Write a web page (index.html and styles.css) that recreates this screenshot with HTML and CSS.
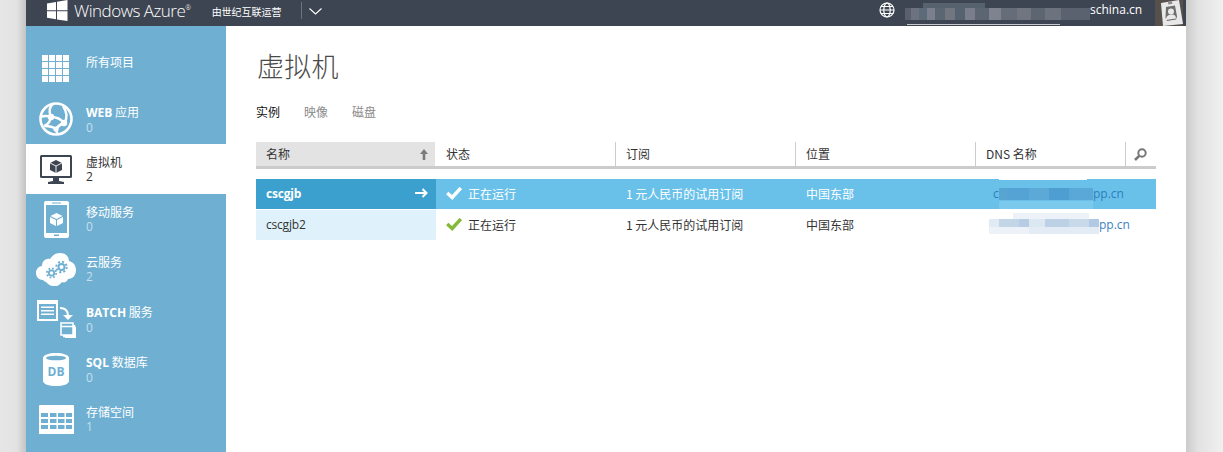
FILE: index.html
```html
<!DOCTYPE html>
<html lang="zh">
<head>
<meta charset="utf-8">
<title>虚拟机 - Windows Azure</title>
<link rel="stylesheet" href="styles.css">
</head>
<body>
<div class="shell">
  <header class="topbar">
    <svg class="flag" width="21" height="21" viewBox="0 0 21 21"><path fill="#fff" d="M0 3.500 9 2v8.300H0zM10 1.800 20.500 0v10.300H10zM0 11.300h9v7.900l-9-1.400zM10 11.300h10.500V21L10 19.400z"/></svg>
    <span class="brand">Windows Azure<sup>®</sup></span>
    <span class="operator">由世纪互联运营</span>
    <span class="divider"></span>
    <svg class="chevron" width="13" height="7" viewBox="0 0 13 7"><path fill="none" stroke="#fff" stroke-width="1.100" d="M.5.5l6 5.500 6-5.500"/></svg>
    <span class="spring"></span>
    <svg class="globe" width="16" height="16" viewBox="0 0 16 16"><g fill="none" stroke="#fff" stroke-width="1.200"><circle cx="8" cy="8" r="7"/><ellipse cx="8" cy="8" rx="3.200" ry="7"/><path d="M1 8h14M2 4.500h12M2 11.500h12"/></g></svg>
    <span class="account"><span class="mosaic-head"></span><span class="acct-text">schina.cn</span></span>
    <span class="avatar"><svg width="25" height="26" viewBox="0 0 25 26"><path fill="#e8e8e8" d="M3 3 21 0l4 24-20 2z"/><path fill="#6d6d6d" d="M8 7l9-1.500 2 11-1 3-9 1.500-1.500-3z"/><circle cx="13" cy="11.500" r="3" fill="#e8e8e8"/><path fill="#e8e8e8" d="M8 20c0-4 2-5 5-5.500s5 1 5 4z"/><path fill="#8a8a8a" d="M10 2l4-.8.400 2.500-4 .8z"/></svg></span>
  </header>

  <div class="body">
    <nav class="sidebar">
      <a class="nav-item">
        <span class="nav-icon"><svg width="28" height="28" viewBox="0 0 28 28"><path fill="#fff" d="M0 0h6v6H0zM7 0h6v6H7zM14 0h6v6h-6zM21 0h6v6h-6zM0 7h6v6H0zM7 7h6v6H7zM14 7h6v6h-6zM21 7h6v6h-6zM0 14h6v6H0zM7 14h6v6H7zM14 14h6v6h-6zM21 14h6v6h-6zM0 21h6v6H0zM7 21h6v6H7zM14 21h6v6h-6zM21 21h6v6h-6z"/></svg></span>
        <span class="nav-text"><span class="nav-label">所有项目</span></span>
      </a>
      <a class="nav-item">
        <span class="nav-icon"><svg width="34" height="34" viewBox="0 0 34 34"><circle cx="17" cy="17" r="15.500" fill="none" stroke="#fff" stroke-width="2.600"/><g fill="none" stroke="#fff" stroke-width="2.400"><path d="M14 2c-4 3-4 8-2 13M2 15c4-2 7-1 10 0M12 15c5 0 10 2 13 6M12 15c-1 5-4 8-7 9M25 21c-3 1-6 3-8 6M25 21c4-5 3-11-1-17M6 24c4 0 8 1 11 3M17 27c0 2 1 4 2 5"/></g><circle cx="12" cy="15" r="3.200" fill="#fff"/><circle cx="25" cy="21" r="3.200" fill="#fff"/><circle cx="17" cy="27" r="2.600" fill="#fff"/></svg></span>
        <span class="nav-text"><span class="nav-label"><b>WEB</b> 应用</span><span class="nav-count">0</span></span>
      </a>
      <a class="nav-item is-active">
        <span class="nav-icon"><svg width="32" height="29" viewBox="0 0 32 29"><path fill="#3e4552" d="M1.500 0h29A1.500 1.500 0 0 1 32 1.500v20a1.500 1.500 0 0 1-1.500 1.500H1.500A1.500 1.500 0 0 1 0 21.500v-20A1.500 1.500 0 0 1 1.500 0z"/><path fill="#fff" d="M2 2h28v19H2z"/><path fill="#3e4552" d="M13 23h6v3l5 1v2H8v-2l5-1zM16 5l6 3v7l-6 3-6-3V8z"/><path fill="none" stroke="#fff" stroke-width=".9" d="M10 8l6 3 6-3M16 11v7"/></svg></span>
        <span class="nav-text"><span class="nav-label">虚拟机</span><span class="nav-count">2</span></span>
      </a>
      <a class="nav-item">
        <span class="nav-icon"><svg width="25" height="37" viewBox="0 0 25 37"><path fill="#fff" d="M2 0h21a2 2 0 0 1 2 2v33a2 2 0 0 1-2 2H2a2 2 0 0 1-2-2V2a2 2 0 0 1 2-2z"/><path fill="#6fb0d2" d="M2 4h21v28H2zM8 1.500h9v1H8zM10 33.500h5V35h-5z"/><path fill="#fff" d="M12.500 12l6 3-6 3-6-3zM6 16l6 3v6l-6-3zM19 16l-6 3v6l6-3z"/></svg></span>
        <span class="nav-text"><span class="nav-label">移动服务</span><span class="nav-count">0</span></span>
      </a>
      <a class="nav-item">
        <span class="nav-icon"><svg width="40" height="33" viewBox="0 0 40 33"><path fill="#fff" d="M10 29a6 6 0 0 1-3-2c-4 0-7-3-7-7s3-7 6-7c0-5 4-8 8-7 2-3 5-6 10-6 6 0 9 4 9 8 4 1 7 4 7 9s-3 9-8 9c-1 3-4 4-6 3-2 3-6 5-9 4-3 0-5-2-7-4z"/><g fill="none" stroke="#6fb0d2"><circle cx="15.500" cy="20" r="2.700" stroke-width="1.800"/><circle cx="15.500" cy="20" r="4.600" stroke-width="1.800" stroke-dasharray="1.800 1.800"/><circle cx="25.500" cy="14" r="3" stroke-width="2"/><circle cx="25.500" cy="14" r="5.200" stroke-width="2" stroke-dasharray="2 2.080"/></g></svg></span>
        <span class="nav-text"><span class="nav-label">云服务</span><span class="nav-count">2</span></span>
      </a>
      <a class="nav-item">
        <span class="nav-icon"><svg width="39" height="38" viewBox="0 0 39 38"><path fill="#fff" d="M0 0h21v21H0z"/><path fill="#6fb0d2" d="M2 4h17v15H2z"/><path fill="#fff" d="M4 6.500h13v1.500H4zM4 10h13v1.500H4zM4 13.500h13V15H4z"/><path fill="none" stroke="#fff" stroke-width="2" d="M23 8c5 0 8 3 8 8"/><path fill="#fff" d="M26 15h10l-5 5z"/><path fill="none" stroke="#fff" stroke-width="1.500" d="M24 23h12v12H24zM24 26.500h12M37.500 25v11.500H26M39 27v10.500H28"/></svg></span>
        <span class="nav-text"><span class="nav-label"><b>BATCH</b> 服务</span><span class="nav-count">0</span></span>
      </a>
      <a class="nav-item">
        <span class="nav-icon"><svg width="26" height="33" viewBox="0 0 26 33"><path fill="#fff" d="M0 5c0-3 6-5 13-5s13 2 13 5v23c0 3-6 5-13 5S0 31 0 28z"/><ellipse cx="13" cy="5" rx="10" ry="2.300" fill="#6fb0d2"/><text x="13" y="23" class="db-text">DB</text></svg></span>
        <span class="nav-text"><span class="nav-label"><b>SQL</b> 数据库</span><span class="nav-count">0</span></span>
      </a>
      <a class="nav-item">
        <span class="nav-icon"><svg width="35" height="29" viewBox="0 0 35 29"><path fill="#fff" d="M1 0h33a1 1 0 0 1 1 1v28H0V1a1 1 0 0 1 1-1z"/><path fill="#6fb0d2" d="M2 8h7v4H2zM11 8h6.500v4H11zM19 8h6.500v4H19zM27 8h6v4h-6zM2 14h7v4H2zM11 14h6.500v4H11zM19 14h6.500v4H19zM27 14h6v4h-6zM2 20h7v4H2zM11 20h6.500v4H11zM19 20h6.500v4H19zM27 20h6v4h-6z"/></svg></span>
        <span class="nav-text"><span class="nav-label">存储空间</span><span class="nav-count">1</span></span>
      </a>
    </nav>

    <main class="content">
      <h1 class="title">虚拟机</h1>
      <div class="tabs"><span class="tab is-current">实例</span><span class="tab">映像</span><span class="tab">磁盘</span></div>

      <div class="table">
        <div class="thead">
          <div class="th is-sorted">名称<svg class="sort" width="8" height="11" viewBox="0 0 8 11"><path fill="#7a7a7a" d="M4 0 8 5H5.300v6H2.700V5H0z"/></svg></div>
          <div class="th">状态</div>
          <div class="th">订阅</div>
          <div class="th">位置</div>
          <div class="th th-dns">DNS 名称</div>
          <div class="th th-search"><svg class="search" width="13" height="13" viewBox="0 0 13 13"><circle cx="8" cy="5" r="3.700" fill="none" stroke="#777" stroke-width="2"/><path stroke="#777" stroke-width="2.600" d="M5.200 7.800 1 12"/></svg></div>
        </div>
        <div class="row is-selected">
          <div class="td td-name">cscgjb<svg class="arrow" width="13" height="10" viewBox="0 0 13 10"><path fill="none" stroke="#fff" stroke-width="2" d="M0 5h11M7.500 1l4 4-4 4"/></svg></div>
          <div class="td"><svg class="check" width="16" height="13" viewBox="0 0 16 13"><path fill="none" stroke="currentColor" stroke-width="3.400" d="M1.200 6l5 4.500L14.800 1"/></svg>正在运行</div>
          <div class="td">1 元人民币的试用订阅</div>
          <div class="td">中国东部</div>
          <div class="td td-dns"><span class="link link-first">c</span><span class="mosaic mosaic-dark"></span><span class="link">pp.cn</span></div>
        </div>
        <div class="row">
          <div class="td td-name">cscgjb2</div>
          <div class="td"><svg class="check" width="16" height="13" viewBox="0 0 16 13"><path fill="none" stroke="currentColor" stroke-width="3.400" d="M1.200 6l5 4.500L14.800 1"/></svg>正在运行</div>
          <div class="td">1 元人民币的试用订阅</div>
          <div class="td">中国东部</div>
          <div class="td td-dns"><span class="mosaic mosaic-light"></span><span class="link">pp.cn</span></div>
        </div>
      </div>
    </main>
  </div>
</div>
</body>
</html>
```
FILE: styles.css
```css
* { box-sizing: border-box; }
html, body { height: 100%; margin: 0; overflow: hidden; }
body {
  padding: 0 37px 0 26px;
  font-family: "Liberation Sans", "Noto Sans CJK SC", sans-serif;
  font-size: 12px;
  color: #333;
  background:
    linear-gradient(90deg, #e6e6e6 0, #e2e2e2 17px, #c4c4c4 26px, transparent 26px),
    linear-gradient(270deg, #f0f0f0 0, #e2e2e2 25px, #cbcbcb 37px);
}
.shell { height: 100%; display: flex; flex-direction: column; background: #fff; }

.topbar {
  flex: none; height: 26px; background: #3e4552; color: #fff;
  display: flex; align-items: flex-start; overflow: hidden;
}
.flag { margin-left: 21px; flex: none; }
.brand { margin-left: 6px; font: 300 17px/21px "Open Sans", sans-serif; letter-spacing: -.5px; white-space: nowrap; }
.brand sup { font-size: 7px; line-height: 0; vertical-align: 7px; }
.operator { margin: 4px 0 0 21px; font: 10px/16px "Noto Sans CJK SC", sans-serif; white-space: nowrap; }
.divider { width: 1px; height: 17px; margin: 2px 0 0 19px; background: #6b7280; }
.chevron { margin: 8px 0 0 7px; flex: none; }
.spring { flex: 1; }
.globe { margin-top: 2px; flex: none; }
.account { margin-left: 10px; width: 250px; display: flex; position: relative; height: 26px; }
.mosaic-head {
  flex: none; width: 185px; height: 21px; margin-top: 3px;
  background:
    linear-gradient(90deg, #5a606c 0 6px, #6d7280 6px 14px, #5d6b78 14px 22px, #7c7f8d 22px 30px, #5a6672 30px 40px, #72767e 40px 50px, #566270 50px 60px, #7a7e8c 60px 70px, #5c6672 70px 84px, #7e838f 84px 96px, #666d78 96px 112px, #70757f 112px 126px, #5d6570 126px 140px, #6c727e 140px 156px, #5a6270 156px 185px) 0 5px / 100% 12px no-repeat,
    linear-gradient(90deg, #3e4552 0 18px, #56626e 18px 80px, #3e4552 80px) 0 0 / 100% 6px no-repeat;
}
.acct-text { margin-top: 2px; font: 12px/16px "Open Sans", sans-serif; white-space: nowrap; }
.account::after { content: ""; position: absolute; left: 2px; bottom: 1px; width: 153px; height: 1px; background: #c9c9c9; }
.avatar { width: 28px; height: 26px; margin-right: 3px; background: #55504c; flex: none; overflow: hidden; }
.avatar svg { display: block; margin-left: 3px; }

.body { flex: 1; display: flex; min-height: 0; }
.sidebar { flex: none; width: 200px; padding-top: 18px; background: #6fb0d2; color: #fff; }
.nav-item { display: flex; height: 50px; }
.nav-icon { flex: none; width: 60px; display: flex; align-items: center; justify-content: center; }
.nav-text { padding-top: 10px; display: flex; flex-direction: column; line-height: 15px; }
.nav-label { font-family: "Noto Sans CJK SC", sans-serif; font-size: 12px; line-height: 16px; }
.nav-label b { font-family: "Open Sans", sans-serif; font-weight: 700; }
.nav-count { font-family: "Open Sans", sans-serif; line-height: 14px; color: #c6dfed; }
.is-active { background: #fff; color: #333; }
.is-active .nav-count { color: #333; }
.db-text { font: 700 12px "Open Sans", sans-serif; fill: #6fb0d2; text-anchor: middle; }

.content { flex: 1; padding: 22px 30px 0; min-width: 0; }
.title { margin: 0 0 0 1px; font: 300 27px/36px "Noto Sans CJK SC", sans-serif; color: #4a4a4a; letter-spacing: .3px; }
.tabs { display: flex; gap: 24px; margin-top: 19px; font-family: "Noto Sans CJK SC", sans-serif; line-height: 18px; }
.tab { color: #8a8a8a; }
.is-current { color: #111; }

.table { margin-top: 21px; width: 900px; font-family: "Noto Sans CJK SC", sans-serif; }
.thead, .row { display: grid; grid-template-columns: repeat(5, 180px); }
.thead { height: 27px; grid-template-columns: repeat(4, 180px) 150px 30px; border-bottom: 3px solid #ccc; margin-bottom: 10px; }
.th { display: flex; align-items: center; justify-content: space-between; padding: 0 5px 0 10px; border-right: 1px solid #ccc; color: #333; line-height: 24px; }
.is-sorted { background: #e3e3e3; border-right: 1px solid #fff; padding-right: 7px; }
.th-search { border-right: 0; justify-content: center; padding: 0 1px 0 0; }
.row { height: 30px; margin-bottom: 1px; }
.td { display: flex; align-items: center; padding: 0 0 2px 10px; white-space: nowrap; color: #333; }
.td-name { justify-content: space-between; padding-right: 8px; background: #dff2fb; font-family: "Open Sans", sans-serif; letter-spacing: -.2px; }
.check { color: #84b93a; margin-right: 6px; flex: none; }
.td-dns { padding: 0 0 0 17px; overflow: hidden; }
.link { color: #3a84c4; font-family: "Open Sans", sans-serif; padding-bottom: 2px; }
.link-first { width: 6px; }
.mosaic { flex: none; height: 30px; }
.mosaic-dark {
  width: 94px;
  background:
    linear-gradient(90deg, #58a5d2 0 8px, #55a3d4 8px 30px, #5ca9d8 30px 50px, #4f9ed2 50px 70px, #5aa8d8 70px 94px) 0 9px / 100% 12px no-repeat,
    linear-gradient(90deg, #7cc9ee 0 94px) 0 22px / 100% 8px no-repeat,
    linear-gradient(90deg, #fff 24px 88px, transparent 88px) 0 0 / 100% 1px no-repeat;
}
.mosaic-light {
  width: 110px; margin-left: -4px;
  background:
    linear-gradient(90deg, #e2ebf4 0 10px, #c3d6e8 10px 30px, #b6cde4 30px 40px, #dbe7f1 40px 56px, #bcd1e6 56px 80px, #c8d9ea 80px 100px, #b2c9e3 100px 110px) 0 9px / 100% 8px no-repeat,
    linear-gradient(90deg, #edf2f8 0 40px, #e3ecf4 40px 110px) 0 17px / 100% 7px no-repeat,
    linear-gradient(90deg, #fff 0 24px, #edf2f8 24px 100px, #fff 100px) 0 3px / 100% 6px no-repeat;
}
.is-selected { background: #69c1ea; }
.is-selected .td { color: #fff; }
.is-selected .td-name { background: #3ba0cd; font-weight: 700; }
.is-selected .link { color: #2d7fbd; }
.is-selected .check { color: #fff; }
```
